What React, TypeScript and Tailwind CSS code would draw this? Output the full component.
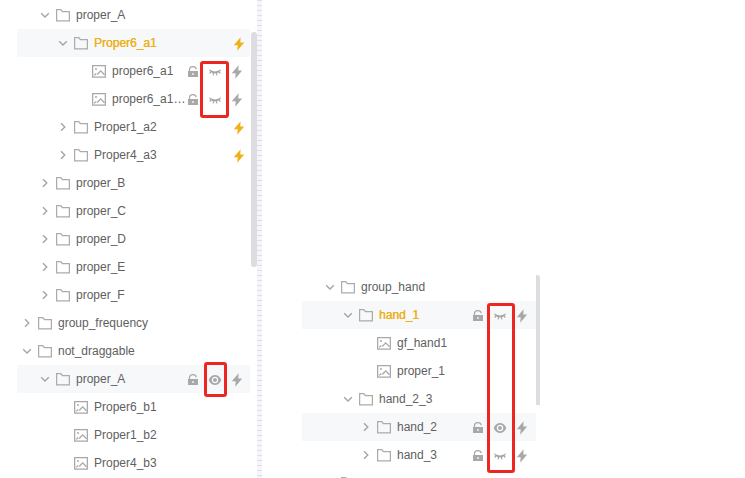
import React from "react";

type Visibility = "open" | "closed";

interface Node {
  label: string;
  depth: number;
  kind: "folder" | "image";
  expanded?: boolean;
  highlighted?: boolean;
  active?: boolean;
  visibility?: Visibility;
  linked?: boolean;
}

const leftNodes: Node[] = [
  { label: "proper_A", depth: 1, kind: "folder", expanded: true },
  { label: "Proper6_a1", depth: 2, kind: "folder", expanded: true, highlighted: true, active: true, linked: true },
  { label: "proper6_a1", depth: 3, kind: "image", visibility: "closed" },
  { label: "proper6_a1…", depth: 3, kind: "image", visibility: "closed" },
  { label: "Proper1_a2", depth: 2, kind: "folder", linked: true },
  { label: "Proper4_a3", depth: 2, kind: "folder", linked: true },
  { label: "proper_B", depth: 1, kind: "folder" },
  { label: "proper_C", depth: 1, kind: "folder" },
  { label: "proper_D", depth: 1, kind: "folder" },
  { label: "proper_E", depth: 1, kind: "folder" },
  { label: "proper_F", depth: 1, kind: "folder" },
  { label: "group_frequency", depth: 0, kind: "folder" },
  { label: "not_draggable", depth: 0, kind: "folder", expanded: true },
  { label: "proper_A", depth: 1, kind: "folder", expanded: true, highlighted: true, visibility: "open" },
  { label: "Proper6_b1", depth: 2, kind: "image" },
  { label: "Proper1_b2", depth: 2, kind: "image" },
  { label: "Proper4_b3", depth: 2, kind: "image" },
];

const rightNodes: Node[] = [
  { label: "group_hand", depth: 1, kind: "folder", expanded: true },
  { label: "hand_1", depth: 2, kind: "folder", expanded: true, highlighted: true, active: true, visibility: "closed" },
  { label: "gf_hand1", depth: 3, kind: "image" },
  { label: "proper_1", depth: 3, kind: "image" },
  { label: "hand_2_3", depth: 2, kind: "folder", expanded: true },
  { label: "hand_2", depth: 3, kind: "folder", highlighted: true, visibility: "open" },
  { label: "hand_3", depth: 3, kind: "folder", visibility: "closed" },
  { label: "", depth: 1, kind: "folder" },
];

const indents = ["pl-[5px]", "pl-[23px]", "pl-[41px]", "pl-[59px]"];

function Chevron({ expanded }: { expanded?: boolean }) {
  return (
    <svg className="size-[10px] shrink-0" viewBox="0 0 10 10" fill="none" stroke="#a3a3a3" strokeWidth="1.35">
      <path d={expanded ? "M1.2 3.2 5 7 8.8 3.2" : "M3 1.2 6.8 5 3 8.8"} />
    </svg>
  );
}

function FolderIcon() {
  return (
    <svg className="h-[13px] w-[14px] shrink-0" viewBox="0 0 14 13" fill="none" stroke="#ababab" strokeWidth="1.25">
      <path d="M.6.7H4.8l1.5 1.8h7.1v9.300H.6Z" />
    </svg>
  );
}

function ImageIcon() {
  return (
    <svg className="h-[13px] w-[14px] shrink-0" viewBox="0 0 14 13" fill="none" stroke="#a8a8a8" strokeWidth="1.25">
      <path d="M.65.65h12.7v11.500H.65Z" />
      <path d="m2.200 10.400 2-1.900M5.200 9.500 8.700 5.800l3.800 4" />
      <circle cx="4" cy="3.900" r="1" fill="#a8a8a8" stroke="none" />
    </svg>
  );
}

function LockIcon() {
  return (
    <svg className="h-3 w-[10px]" viewBox="0 0 10 12">
      <path d="M1.500 6V3.600C1.500-.2 7.900-.2 8.200 3.200" fill="none" stroke="#a8a8a8" strokeWidth="1.200" />
      <path d="M0 5h10v6H0Z" fill="#a8a8a8" />
      <path d="M4 8h2" stroke="#f0f0f0" strokeWidth="1.300" />
    </svg>
  );
}

function EyeIcon({ state }: { state: Visibility }) {
  if (state === "open") {
    return (
      <svg className="h-[10px] w-[14px]" viewBox="0 0 14 10">
        <path d="M.7 5C2 1.600 4.400 0 7 0s5 1.600 6.300 5C12 8.400 9.600 10 7 10S2 8.400.7 5Z" fill="#a8a8a8" />
        <circle cx="7" cy="5" r="2.600" fill="#a8a8a8" stroke="#fafafa" strokeWidth="1.300" />
      </svg>
    );
  }
  return (
    <svg className="h-[10px] w-[14px]" viewBox="0 0 14 10" fill="none" stroke="#a6a6a6">
      <path d="M.9 2.300Q7 6.600 13.100 2.300L12.200 4.200Q7 8.600 1.800 4.200Z" fill="#a6a6a6" stroke="none" />
      <path d="M3.200 4.700 1.700 6.500M5.600 5.500 5.200 8.300M8.400 5.500 8.800 8.300M10.800 4.700 12.300 6.500" strokeWidth="1.200" />
    </svg>
  );
}

function BoltIcon({ gold }: { gold?: boolean }) {
  return (
    <svg className="h-[14px] w-3" viewBox="0 0 12 14" fill={gold ? "#f0b016" : "#a8a8a8"}>
      <path d="M7.600.3.8 8.200h3.900L4.200 13.800 11.200 5.600H7.300Z" />
    </svg>
  );
}

function Actions({ node, inset }: { node: Node; inset: string }) {
  if (node.linked) {
    return (
      <div className="ml-auto flex w-[22px] shrink-0 justify-center pt-px">
        <BoltIcon gold />
      </div>
    );
  }
  if (!node.visibility) return null;
  return (
    <div className={`ml-auto grid w-[66px] shrink-0 grid-cols-3 place-items-center pt-[2px] ${inset}`}>
      <LockIcon />
      <EyeIcon state={node.visibility} />
      <BoltIcon />
    </div>
  );
}

function TreeRow({ node, inset }: { node: Node; inset: string }) {
  return (
    <div className={`flex h-7 shrink-0 items-center ${indents[node.depth]} ${node.highlighted ? "bg-[#f7f8fa]" : ""}`}>
      <div className="mr-[6px] flex size-[10px] shrink-0">{node.kind === "folder" && <Chevron expanded={node.expanded} />}</div>
      {node.kind === "folder" ? <FolderIcon /> : <ImageIcon />}
      <span className={`ml-[6px] min-w-0 whitespace-nowrap ${node.active ? "text-[#eeb01b] [text-shadow:0.3px_0_0_#eeb01b]" : "text-[#606060]"}`}>
        {node.label}
      </span>
      <Actions node={node} inset={inset} />
    </div>
  );
}

function Tree({ nodes, inset }: { nodes: Node[]; inset: string }) {
  return (
    <>
      {nodes.map((node, i) => (
        <TreeRow key={i} node={node} inset={inset} />
      ))}
    </>
  );
}

export default function App() {
  return (
    <div className="relative flex h-[478px] w-[745px] overflow-hidden bg-white font-['Liberation_Sans',Arial,sans-serif] text-[12px] leading-4">
      <section className="ml-[17px] w-[233px] shrink-0 pt-px">
        <Tree nodes={leftNodes} inset="mr-[2px]" />
      </section>
      <div className="ml-px mt-8 h-[235px] w-[6px] shrink-0 rounded-[3px] bg-[#dddde1]" />
      <div className="w-[5px] shrink-0 bg-[#f5f6f9] bg-[repeating-linear-gradient(to_bottom,#dcdfe5_0px,#dcdfe5_1px,#f5f6f9_1px,#f5f6f9_5px)]" />
      <section className="ml-10 mt-[273px] flex h-[205px] w-[234px] shrink-0 flex-col overflow-hidden">
        <Tree nodes={rightNodes} inset="mr-[3px]" />
      </section>
      <div className="mt-[275px] h-[130px] w-1 shrink-0 rounded-tr-[3px] bg-[#dddde1]" />

      <div className="absolute left-[200px] top-[61px] h-[57px] w-[29px] rounded-[3px] border-3 border-[#ee2622]" />
      <div className="absolute left-[204px] top-[362px] h-[35px] w-[23px] rounded-[3px] border-3 border-[#ee2622]" />
      <div className="absolute left-[487px] top-[303px] h-[170px] w-[28px] rounded-[3px] border-3 border-[#ee2622]" />
    </div>
  );
}
